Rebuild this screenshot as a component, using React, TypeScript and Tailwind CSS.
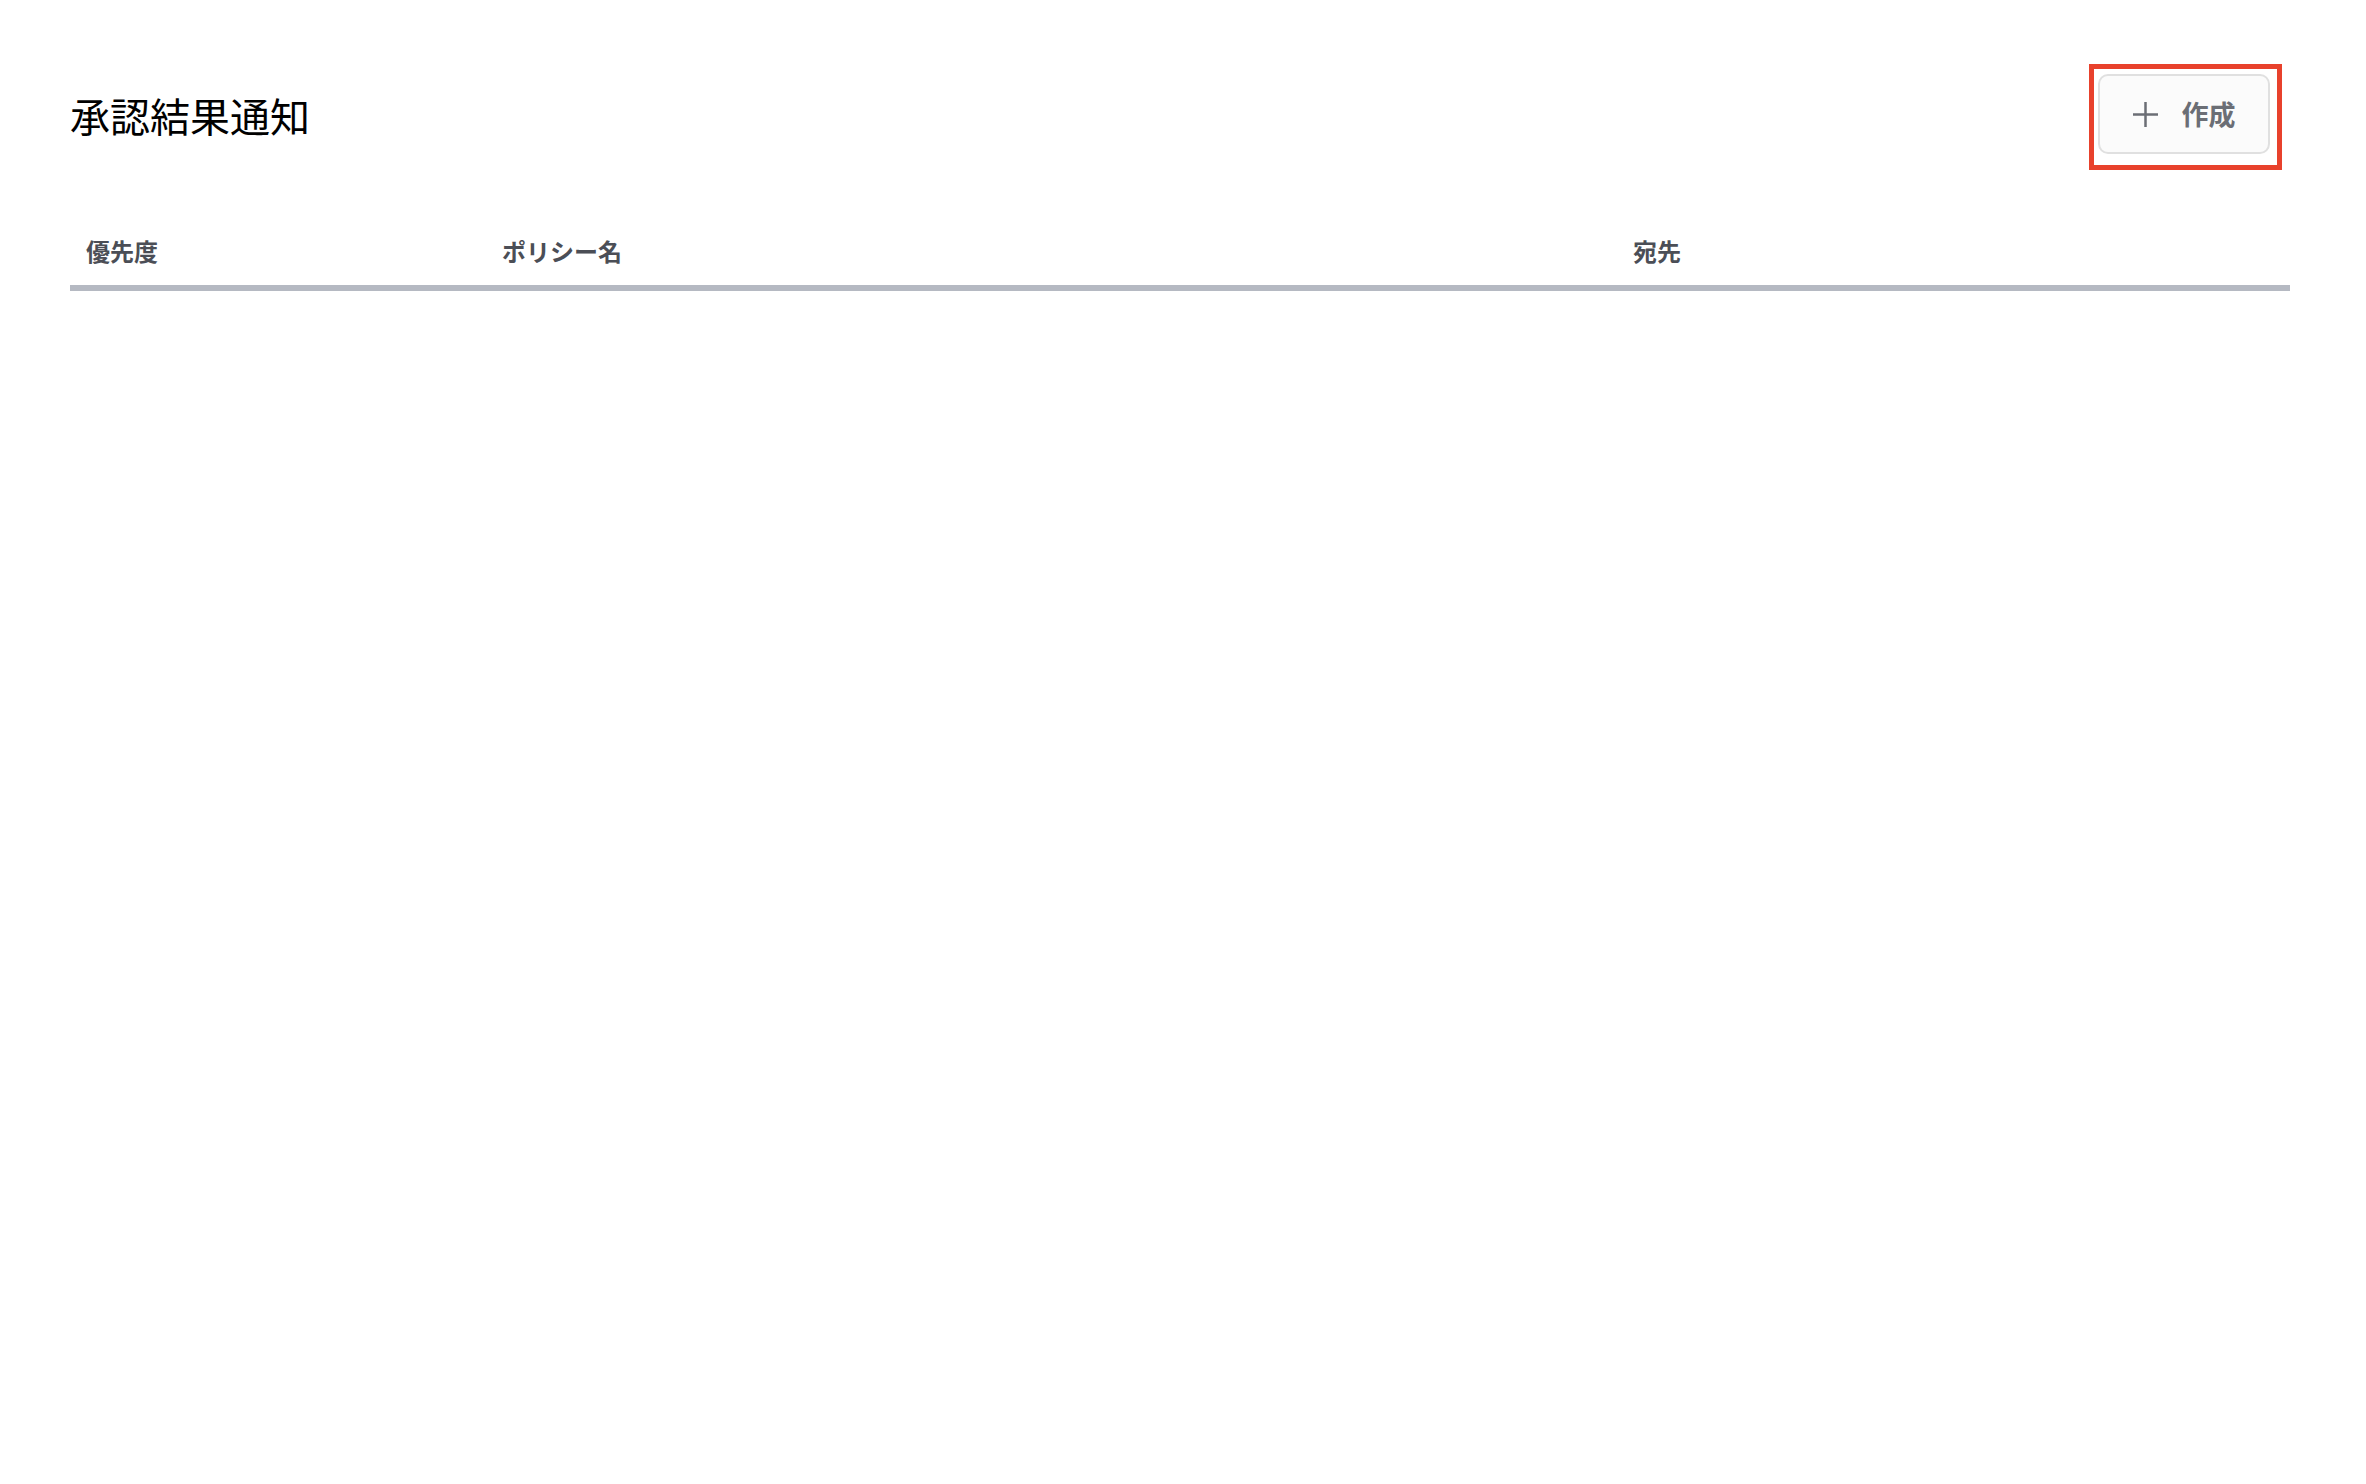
const columns = [
  { key: "priority", label: "優先度", className: "w-[416px]" },
  { key: "name", label: "ポリシー名", className: "w-[1131px]" },
  { key: "to", label: "宛先", className: "flex-1" },
]

function PlusIcon() {
  return (
    <svg width="25" height="25" viewBox="0 0 25 25" fill="none" stroke="currentColor" strokeWidth="2.5">
      <line x1="12.5" y1="0" x2="12.5" y2="25" />
      <line x1="0" y1="12.5" x2="25" y2="12.5" />
    </svg>
  )
}

export default function App() {
  return (
    <div
      className="min-h-[1484px] w-full bg-white pl-[70px] pr-[76px] pt-[64px]"
      style={{ fontFamily: '"Noto Sans CJK JP", "Noto Sans", sans-serif' }}
    >
      <div className="flex h-[106px] items-center justify-between pr-[8px]">
        <h1 className="-mt-[4px] text-[40px] font-normal leading-[48px] text-black">承認結果通知</h1>
        {/* red annotation frame around the create button */}
        <div className="border-[5px] border-[#e8412c] pb-[11px] pl-[4px] pr-[7px] pt-[5px]">
          <button className="flex h-[80px] w-[172px] items-center justify-center gap-[24px] rounded-[10px] border-2 border-[#e0e0e0] bg-[#fbfbfb] text-[#6b6e75]">
            <PlusIcon />
            <span className="text-[27px] font-semibold leading-[32px]">作成</span>
          </button>
        </div>
      </div>

      <div className="mt-[63px]">
        <div className="flex border-b-[6px] border-[#b5b9c2] pb-[16px]">
          {columns.map((c) => (
            <div
              key={c.key}
              className={`${c.className} px-[16px] text-[24px] font-bold leading-[36px] text-[#4b4e56]`}
            >
              {c.label}
            </div>
          ))}
        </div>
      </div>
    </div>
  )
}
